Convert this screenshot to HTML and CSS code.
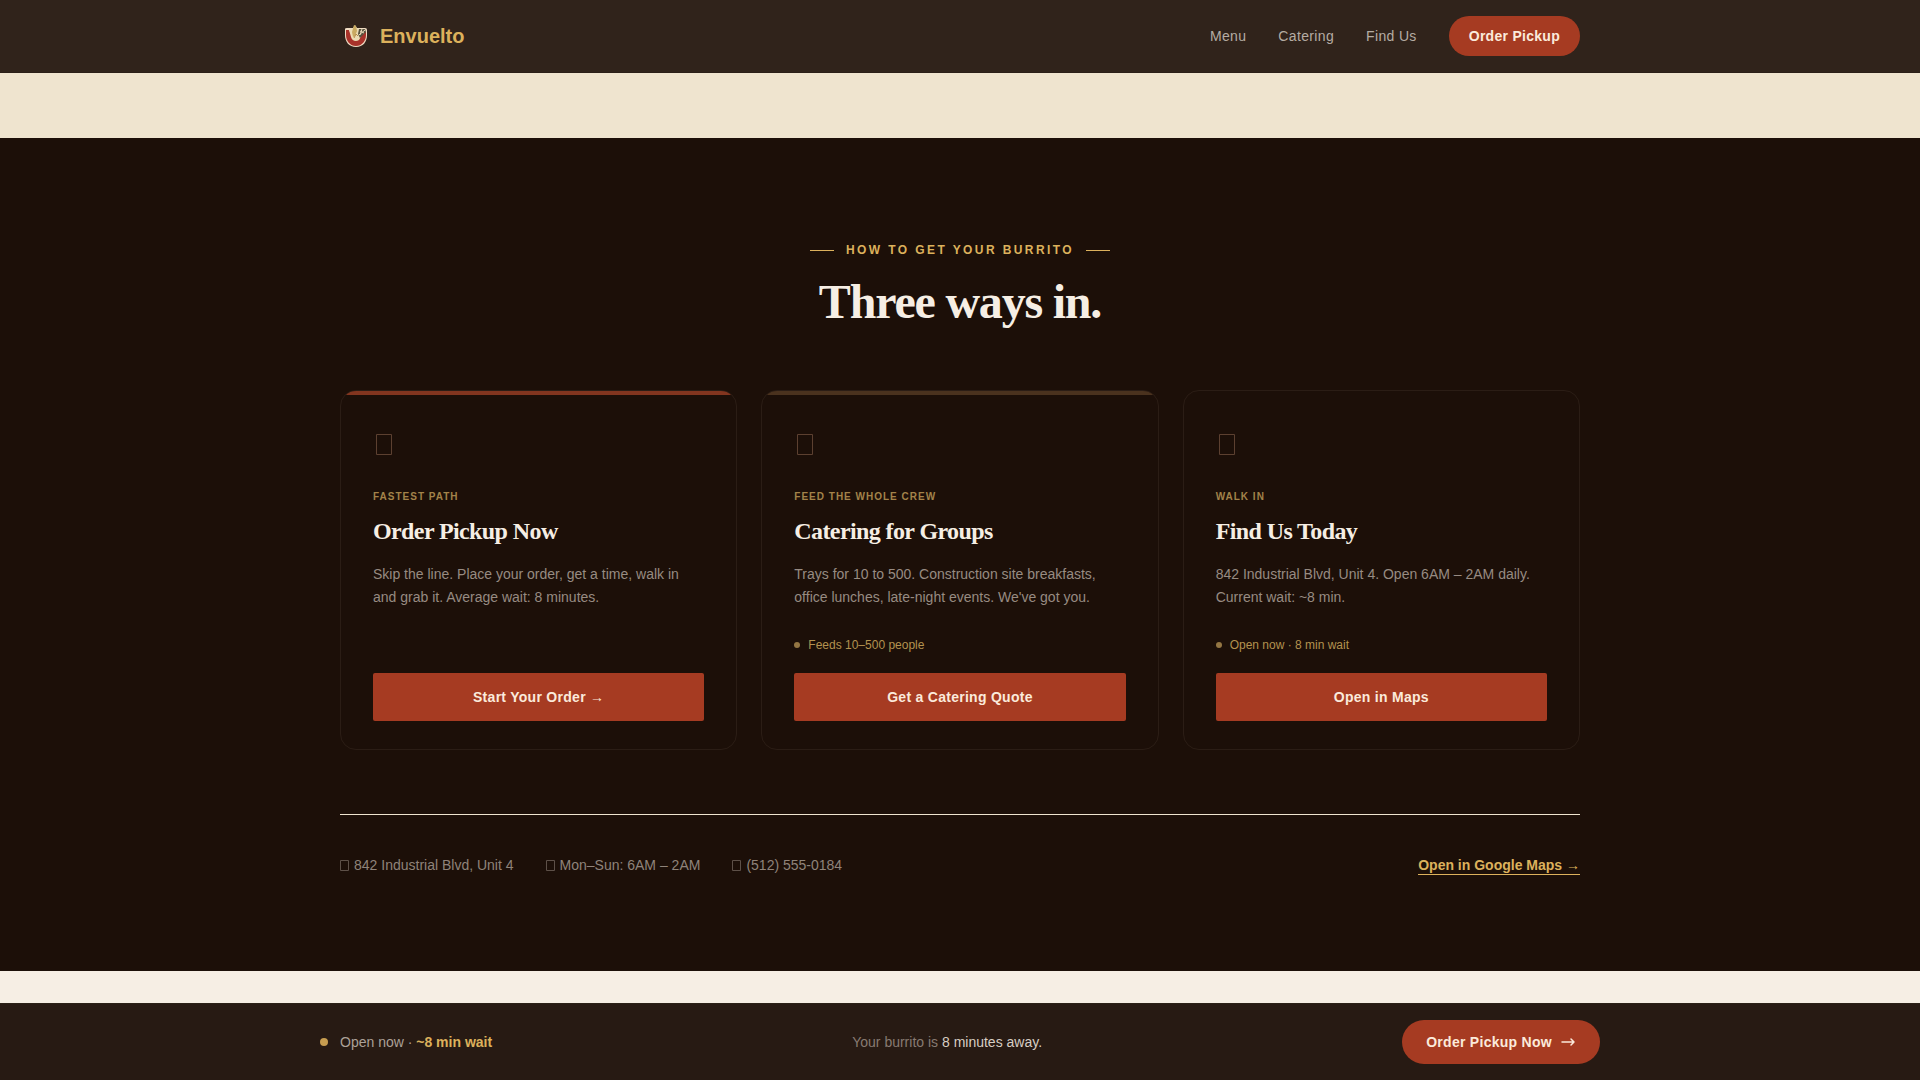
FILE: index.html
```html
<!DOCTYPE html>
<html lang="en">
<head>
<meta charset="utf-8">
<meta name="viewport" content="width=device-width, initial-scale=1">
<title>Envuelto</title>
<link rel="stylesheet" href="styles.css">
</head>
<body>
<header class="site-header">
  <div class="container header-row">
    <a class="brand" href="#">
      <svg class="brand-mark" viewBox="0 0 32 32" aria-hidden="true">
        <path d="M5 9q0-1 2-1h18q2 0 2 2v5c0 7-4 12-11 12S5 22 5 15z" fill="#f0dcc3"/>
        <path d="M6 10h3l3 6 5 4 8-8h1v3c0 6-4 11-10 11S6 21 6 15z" fill="#a8322a"/>
        <path d="M9 10l4-2 2-3 2 3 4 1 2 4-4 7c-3 2-7 1-8-3z" fill="#ecdcb4"/>
        <path d="M12 12l2-7 2 1 1 5-2 5-2 1z" fill="#c9aa62"/>
        <path d="M19 9h6l1 3-6 6-2-4z" fill="#57533f"/>
        <path d="M19 15l6-5M20 11l4 2M22 9l-2 6" stroke="#ead9b8" stroke-width="1" fill="none"/>
        <path d="M14 18l2-4 2 2" stroke="#b58e4c" stroke-width="1" fill="none"/>
      </svg>
      <span>Envuelto</span>
    </a>
    <nav class="nav">
      <a class="nav-link" href="#">Menu</a>
      <a class="nav-link" href="#">Catering</a>
      <a class="nav-link" href="#">Find Us</a>
      <button class="pill" type="button">Order Pickup</button>
    </nav>
  </div>
</header>
<main class="main">
  <div class="band band-sand"></div>
  <section class="ways">
    <div class="container">
      <p class="eyebrow">How to get your burrito</p>
      <h2 class="title">Three ways in.</h2>
      <div class="cards">
        <article class="card card-red">
          <svg class="card-icon" viewBox="0 0 22 22" aria-hidden="true"><path d="M3.5 .5h15v20h-15z"/></svg>
          <p class="card-label">Fastest path</p>
          <h3 class="card-title">Order Pickup Now</h3>
          <p class="card-text">Skip the line. Place your order, get a time, walk in and grab it. Average wait: 8 minutes.</p>
          <button class="card-button" type="button">Start Your Order →</button>
        </article>
        <article class="card card-brown">
          <svg class="card-icon" viewBox="0 0 22 22" aria-hidden="true"><path d="M3.5 .5h15v20h-15z"/></svg>
          <p class="card-label">Feed the whole crew</p>
          <h3 class="card-title">Catering for Groups</h3>
          <p class="card-text">Trays for 10 to 500. Construction site breakfasts, office lunches, late-night events. We've got you.</p>
          <p class="card-meta">Feeds 10–500 people</p>
          <button class="card-button" type="button">Get a Catering Quote</button>
        </article>
        <article class="card">
          <svg class="card-icon" viewBox="0 0 22 22" aria-hidden="true"><path d="M3.5 .5h15v20h-15z"/></svg>
          <p class="card-label">Walk in</p>
          <h3 class="card-title">Find Us Today</h3>
          <p class="card-text">842 Industrial Blvd, Unit 4. Open 6AM – 2AM daily. Current wait: ~8 min.</p>
          <p class="card-meta">Open now · 8 min wait</p>
          <button class="card-button" type="button">Open in Maps</button>
        </article>
      </div>
      <div class="info">
        <div class="info-list">
          <span class="info-item"><svg class="info-icon" viewBox="0 0 10 11" aria-hidden="true"><path d="M.5 .5h8v10h-8z"/></svg>842 Industrial Blvd, Unit 4</span>
          <span class="info-item"><svg class="info-icon" viewBox="0 0 10 11" aria-hidden="true"><path d="M.5 .5h8v10h-8z"/></svg>Mon–Sun: 6AM – 2AM</span>
          <span class="info-item"><svg class="info-icon" viewBox="0 0 10 11" aria-hidden="true"><path d="M.5 .5h8v10h-8z"/></svg>(512) 555-0184</span>
        </div>
        <a class="info-link" href="#">Open in Google Maps →</a>
      </div>
    </div>
  </section>
  <div class="band band-cream"></div>
</main>
<aside class="order-bar">
  <div class="order-row">
    <div class="status"><p>Open now · <strong>~8 min wait</strong></p></div>
    <p class="promise">Your burrito is <span class="promise-time">8 minutes away.</span></p>
    <button class="pill pill-large" type="button">Order Pickup Now
      <svg class="arrow" viewBox="0 0 16 16" aria-hidden="true"><path d="M2 8h12M11 5l3 3-3 3"/></svg>
    </button>
  </div>
</aside>
</body>
</html>
```
FILE: styles.css
```css
:root {
  --ink: #1c0f08;
  --cream: #f6eee4;
  --sand: #efe4cf;
  --gold: #dcb15c;
  --red: #a63b22;
  --sans: "Liberation Sans", Arial, sans-serif;
  --serif: "Liberation Serif", "Times New Roman", serif;
}

* {
  box-sizing: border-box;
  margin: 0;
}

body {
  display: flex;
  flex-direction: column;
  min-height: 100vh;
  background: var(--cream);
  color: var(--cream);
  font: 14px/24px var(--sans);
}

a {
  color: inherit;
  text-decoration: none;
}

button {
  border: 0;
  background: var(--red);
  color: #fbeadb;
  font: bold 14px/16px var(--sans);
  letter-spacing: 0.02em;
  cursor: pointer;
}

.container {
  max-width: 1240px;
  margin: 0 auto;
}

.site-header {
  padding: 16px 24px;
  background: #30231b;
  border-bottom: 1px solid #2b1f18;
}

.header-row,
.brand,
.nav {
  display: flex;
  align-items: center;
}

.header-row {
  justify-content: space-between;
}

.brand {
  gap: 8px;
  color: var(--gold);
  font-size: 20px;
  font-weight: bold;
}

.brand-mark {
  width: 32px;
  height: 32px;
}

.nav {
  gap: 32px;
  color: #b5aca3;
}

.nav-link {
  letter-spacing: 0.025em;
}

.pill {
  display: flex;
  align-items: center;
  gap: 8px;
  padding: 12px 20px;
  border-radius: 24px;
}

.pill-large {
  padding: 14px 24px;
}

.arrow {
  width: 16px;
  height: 16px;
  fill: none;
  stroke: currentColor;
  stroke-width: 1.5;
  stroke-linecap: round;
  stroke-linejoin: round;
}

.main {
  display: flex;
  flex: 1;
  flex-direction: column;
}

.band-sand {
  height: 65px;
  background: var(--sand);
}

.band-cream {
  flex: 1;
  min-height: 32px;
  background: var(--cream);
}

.ways {
  padding: 100px 24px 94px;
  background: var(--ink);
}

.eyebrow {
  display: flex;
  align-items: center;
  justify-content: center;
  gap: 12px;
  color: var(--gold);
  font-size: 12px;
  font-weight: bold;
  letter-spacing: 0.2em;
  text-transform: uppercase;
}

.eyebrow::before,
.eyebrow::after {
  width: 24px;
  height: 1px;
  background: var(--gold);
  content: "";
}

.title {
  margin: 12px 0 60px;
  font: bold 48px/56px var(--serif);
  letter-spacing: -0.025em;
  text-align: center;
}

.cards {
  display: grid;
  grid-template-columns: repeat(3, 1fr);
  gap: 24px;
}

.card {
  position: relative;
  display: flex;
  flex-direction: column;
  overflow: hidden;
  padding: 43px 32px 28px;
  border: 1px solid #2b1d15;
  border-radius: 16px;
}

.card-red::before,
.card-brown::before {
  position: absolute;
  inset: 0 0 auto;
  height: 4px;
  background: #82351f;
  content: "";
}

.card-brown::before {
  background: #4a321e;
}

.card-icon {
  width: 22px;
  height: 22px;
  margin-bottom: 29px;
  fill: none;
  stroke: #5c4030;
}

.card-label {
  color: #a3834a;
  font-size: 10px;
  font-weight: bold;
  letter-spacing: 0.1em;
  text-transform: uppercase;
}

.card-title {
  margin: 6px 0 16px;
  font: bold 24px/32px var(--serif);
  letter-spacing: -0.025em;
}

.card-text {
  margin-bottom: 24px;
  color: #978b82;
  line-height: 23px;
}

.card-meta {
  display: flex;
  align-items: center;
  gap: 8px;
  margin-bottom: 16px;
  color: #b3924f;
  font-size: 12px;
}

.card-meta::before {
  width: 6px;
  height: 6px;
  border-radius: 50%;
  background: #947643;
  content: "";
}

.card-button {
  margin-top: auto;
  padding: 16px;
  border-radius: 2px;
}

.info {
  display: flex;
  align-items: center;
  justify-content: space-between;
  margin-top: 64px;
  padding-top: 38px;
  border-top: 1px solid var(--sand);
}

.info-list {
  display: flex;
  gap: 32px;
  color: #8f837a;
}

.info-item {
  display: flex;
  align-items: center;
  gap: 4px;
}

.info-icon {
  width: 10px;
  height: 11px;
  fill: none;
  stroke: #5d5048;
}

.info-link {
  border-bottom: 1px solid var(--gold);
  color: var(--gold);
  font-weight: bold;
  line-height: 18px;
}

.order-bar {
  padding: 16px 24px;
  background: #271a13;
  border-top: 1px solid #2b2117;
}

.order-row {
  display: flex;
  align-items: center;
  justify-content: space-between;
  max-width: 1280px;
  margin: 0 auto;
}

.status {
  display: flex;
  align-items: center;
  gap: 12px;
  color: #aca198;
}

.status::before {
  width: 8px;
  height: 8px;
  border-radius: 50%;
  background: #c79d50;
  content: "";
}

.status strong {
  color: var(--gold);
}

.promise {
  color: #877b72;
}

.promise-time {
  color: #d8cec3;
}
```
